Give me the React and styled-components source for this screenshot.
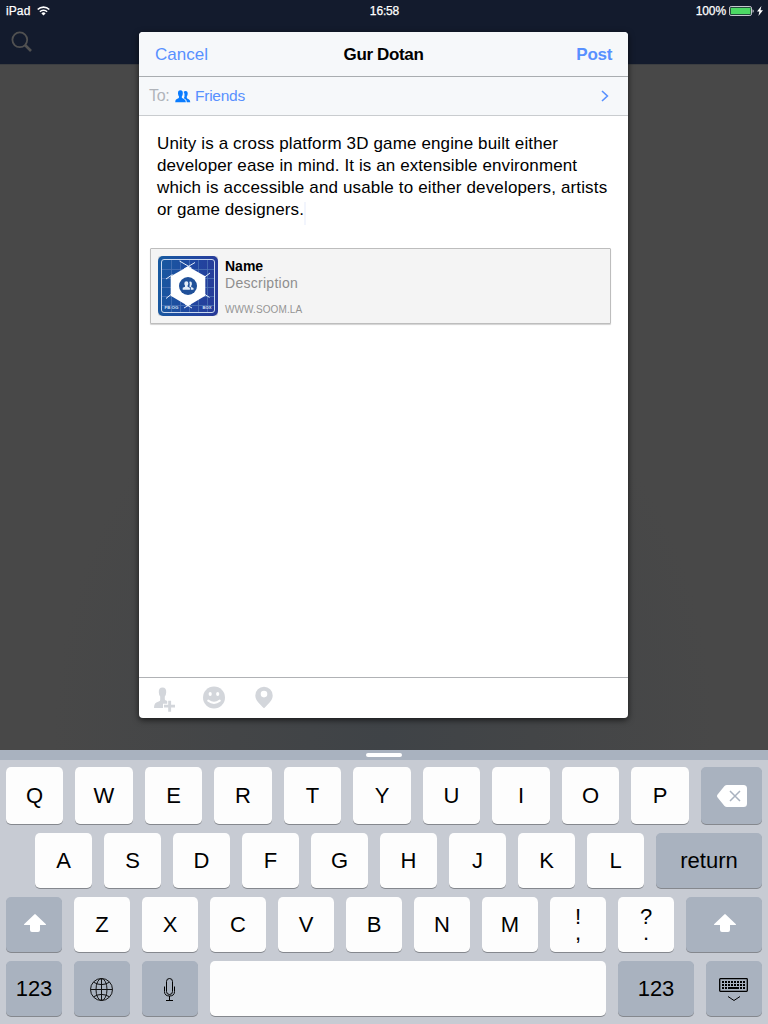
import React from "react";
import styled, { createGlobalStyle } from "styled-components";

const GlobalStyle = createGlobalStyle`
  * { box-sizing: border-box; }
  body {
    margin: 0;
    font-family: "Liberation Sans", Arial, Helvetica, sans-serif;
    color: #000;
  }
  svg { display: block; flex: none; }
`;

const Screen = styled.div`
  position: relative;
  display: flex;
  flex-direction: column;
  width: 768px;
  height: 1024px;
  overflow: hidden;
  background: radial-gradient(ellipse 330px 420px at 384px 740px, #3f4347 0%, #434547 45%, #484848 100%);
`;

const TopArea = styled.header`
  flex: none;
  height: 65px;
  background: #131b2d;
  border-bottom: 1px solid #3c3e41;
`;

const StatusBar = styled.div`
  display: grid;
  grid-template-columns: 1fr auto 1fr;
  align-items: center;
  height: 20px;
  padding: 2px 5px 0 6px;
  color: #fff;
  font-size: 12px;
  line-height: 18px;
`;

const StatusGroup = styled.div`
  display: flex;
  align-items: center;
  justify-content: ${(p) => (p.$end ? "flex-end" : "flex-start")};
  gap: ${(p) => p.$gap}px;
`;

const StatusText = styled.span`
  letter-spacing: ${(p) => p.$spacing || 0}px;
  -webkit-text-stroke: 0.25px #fff;
`;

const SearchButton = styled.div`
  padding: 11px 0 0 11px;
`;

const Dialog = styled.main`
  position: absolute;
  left: 139px;
  top: 32px;
  display: flex;
  flex-direction: column;
  width: 489px;
  height: 686px;
  overflow: hidden;
  border-radius: 4px;
  background: #fff;
`;

const DialogShadow = styled.div`
  position: absolute;
  left: 139px;
  top: 32px;
  width: 489px;
  height: 686px;
  border-radius: 4px;
  box-shadow: 0 2px 6px rgba(0, 0, 0, 0.65);
`;

const DialogHeader = styled.div`
  display: grid;
  grid-template-columns: 1fr auto 1fr;
  align-items: center;
  flex: none;
  height: 45px;
  padding: 2px 16px 0;
  border-bottom: 1px solid #a9adb0;
  background: #f6f8fa;
  font-size: 17px;
  line-height: 20px;
`;

const HeaderAction = styled.span`
  color: #5890ff;
  font-weight: ${(p) => (p.$strong ? 700 : 400)};
  text-align: ${(p) => (p.$strong ? "right" : "left")};
  letter-spacing: ${(p) => p.$spacing || 0}px;
`;

const Title = styled.h1`
  margin: 0;
  font-size: 17px;
  line-height: 20px;
  font-weight: 700;
  letter-spacing: -0.35px;
`;

const AudienceRow = styled.div`
  display: flex;
  align-items: center;
  flex: none;
  height: 39px;
  padding: 0 19px 0 10px;
  border-bottom: 1px solid #c9cccf;
  background: #f6f8fa;
  font-size: 16px;
`;

const AudienceLabel = styled.span`
  width: 26px;
  color: #b0b4ba;
  font-size: 16px;
  letter-spacing: -0.3px;
`;

const AudienceValue = styled.span`
  flex: 1;
  margin-left: 4px;
  color: #5890ff;
  font-size: 15.5px;
  letter-spacing: -0.25px;
`;

const Message = styled.p`
  flex: none;
  margin: 0;
  padding: 17px 0 27px 18px;
  font-size: 17px;
  line-height: 22px;
  white-space: nowrap;
`;

const Line = styled.span`
  display: block;
  letter-spacing: ${(p) => p.$spacing || 0}px;
`;

const Caret = styled.i`
  display: inline-block;
  width: 2px;
  height: 23px;
  margin: -2px 0 -5px;
  background: #f2f5fd;
  vertical-align: -5px;
`;

const LinkCard = styled.section`
  display: flex;
  flex: none;
  gap: 7px;
  width: 461px;
  height: 76px;
  margin-left: 11px;
  padding: 7px;
  border: 1px solid #bdbdbd;
  border-radius: 1px;
  background: #f4f4f4;
  box-shadow: 0 1px 1px rgba(0, 0, 0, 0.18);
`;

const LinkText = styled.div`
  display: flex;
  flex-direction: column;
  padding-top: 2px;
`;

const LinkName = styled.strong`
  font-size: 14px;
  line-height: 17px;
`;

const LinkDescription = styled.span`
  color: #8e8e8e;
  font-size: 14px;
  line-height: 17px;
  letter-spacing: 0.28px;
`;

const LinkDomain = styled.span`
  margin-top: 12px;
  color: #949494;
  font-size: 10px;
  line-height: 12px;
  letter-spacing: 0.1px;
`;

const ComposeTools = styled.footer`
  display: flex;
  flex: none;
  height: 41px;
  margin-top: auto;
  padding: 8px 0 0 15px;
  gap: 27px;
  border-top: 1px solid #b0b2b5;
`;

const Keyboard = styled.section`
  position: relative;
  flex: none;
  height: 274px;
  margin-top: auto;
  background: #c7cbd3;
`;

const Handle = styled.div`
  display: flex;
  justify-content: center;
  height: 10px;
  padding-top: 3px;
  background: #a9b2bf;

  &::after {
    content: "";
    width: 36px;
    height: 4px;
    border-radius: 2px;
    background: #fff;
  }
`;

const Keys = styled.div`
  display: flex;
  flex-direction: column;
  gap: 9px;
  padding-top: 7px;
`;

const KeyRow = styled.div`
  display: flex;
  gap: 12px;
  height: ${(p) => p.$height}px;
  padding-left: ${(p) => p.$indent}px;
`;

const Key = styled.div`
  display: flex;
  flex-direction: column;
  align-items: center;
  justify-content: center;
  flex: none;
  width: ${(p) => p.$width}px;
  border-radius: 5px;
  background: ${(p) => (p.$dark ? "#a9b2bf" : "#fdfdfd")};
  box-shadow: 0 1px 0 #85888e;
  font-size: 22px;
  line-height: 26px;
`;

const ShiftKey = styled(Key)`
  padding: 0 0 3px 2px;
`;

const FunctionKey = styled(Key)`
  padding-top: 2px;
`;

const StackedLabel = styled.span`
  line-height: 16px;
  text-align: center;
  white-space: pre-line;
`;

const Wifi = () => (
  <svg width="13" height="10" viewBox="0 0 13 10" fill="none" stroke="#fff" strokeWidth="1.6">
    <path d="M.7 3.5a8.2 8.2 0 0 1 11.6 0" />
    <path d="M2.9 5.8a5.1 5.1 0 0 1 7.2 0" />
    <path d="M6.5 9.5 4.4 7.4a3 3 0 0 1 4.2 0Z" fill="#fff" stroke="none" />
  </svg>
);

const Battery = () => (
  <svg width="25" height="10" viewBox="0 0 25 10">
    <rect x=".5" y=".5" width="22" height="9" rx="1.6" fill="none" stroke="#c5c8ce" />
    <rect x="1.7" y="1.7" width="19.8" height="6.6" rx=".6" fill="#4cd964" />
    <path d="M23.5 3.2q1.3.4 1.3 1.8t-1.3 1.8Z" fill="#c5c8ce" />
  </svg>
);

const Bolt = () => (
  <svg width="6" height="10" viewBox="0 0 6 10" fill="#fff">
    <path d="M4.4 0 0 5.500h2.400L1.400 10 6 4.200H3.500Z" />
  </svg>
);

const Search = () => (
  <svg width="22" height="22" viewBox="0 0 22 22" fill="none" stroke="#515151">
    <circle cx="8.8" cy="8.8" r="7.4" strokeWidth="1.8" />
    <path d="m14 14 6 6" strokeWidth="2.6" />
  </svg>
);

const Friends = () => (
  <svg width="16" height="13" viewBox="0 0 16 13" fill="#0a7cff">
    <path d="M8.600 1.900Q9.300.900 10.600.900q2.300 0 2.100 2.900-.1 1.800-.9 2.700v1.300q0 .7 1.500 1.200 2 .8 2 3.300h-3.500q0-2.300-1.700-3.300l-1.400-.800q1.100-1.500.8-4-.1-1.300-.9-2.300Z" />
    <path d="M5.400.3Q8 .3 7.800 3.600q-.1 1.900-1 2.800v1.200q0 .6 1.600 1.200 2.400.9 2.500 3.500H.2q0-2.600 1.600-3.200Q4 8.300 4 7.500V6.400Q3.100 5.500 3 3.600 2.800.3 5.400.3Z" />
  </svg>
);

const ChevronRight = () => (
  <svg width="8" height="12" viewBox="0 0 8 12" fill="none" stroke="#5890ff" strokeWidth="1.6">
    <path d="m1 1 5.400 5L1 11" />
  </svg>
);

const AppIcon = () => (
  <svg width="60" height="60" viewBox="0 0 60 60">
    <defs>
      <linearGradient id="iconBlue" x1="0" x2="1" y1=".5" y2=".6">
        <stop offset="0" stopColor="#1859a0" />
        <stop offset=".6" stopColor="#2146a0" />
        <stop offset="1" stopColor="#283a98" />
      </linearGradient>
    </defs>
    <rect width="60" height="60" rx="2" fill="#d5d7da" />
    <rect width="60" height="60" rx="5" fill="url(#iconBlue)" />
    <path d="M13.500 3v54M22.500 3v54M31.500 3v54M40.500 3v54M49.500 3v54M3 13.500h54M3 22.500h54M3 31.500h54M3 40.500h54M3 49.500h54" stroke="#4d73b5" strokeWidth=".8" />
    <rect x="3.500" y="3.500" width="53" height="53" rx="2.500" fill="none" stroke="#cbd9ef" strokeWidth="1" />
    <path d="m21.500 5 12 7M37 6.500 26 13M8 23l6.500-4.500M46 21.500l6-4.500M8 42.500l5.500-4.500M47 38.500l4.500 3M26 52l7-4M27 48l7 4" stroke="#e5edf8" strokeWidth="1" />
    <path d="M30 10.500 47.300 20.300v19.400L30 50 12.700 39.700V20.300Z" fill="#fff" />
    <circle cx="30" cy="30" r="9" fill="#205099" />
    <g fill="#e5edf8">
      <path d="M28.500 25.200q1.900 0 1.800 2.300-.1 1.400-.7 2v1.300l2.300 1v2h-7.200v-2l2.300-1v-1.300q-.7-.6-.7-2-.1-2.300 2.200-2.300Z" />
      <path d="M31.300 25.800q2.600-1 2.600 2 0 1.400-.7 2v1.100l2.300 1v1.900h-2.700v-2.500l-1.400-.6q.9-2.600-.1-4.900Z" />
    </g>
    <g fill="#dce5f4" fontSize="3.400" fontWeight="700">
      <text x="6.500" y="52.500" textLength="14" lengthAdjust="spacingAndGlyphs">FB OG</text>
      <text x="44.500" y="52.500" textLength="9" lengthAdjust="spacingAndGlyphs">BOX</text>
    </g>
  </svg>
);

const AddPerson = () => (
  <svg width="22" height="26" viewBox="0 0 22 26">
    <path d="M8.500 1.500q4 0 3.700 4.700-.1 2.900-1.400 4.300v2.700q0 .8 1.200 1.400l3 1.200v6.200H0q0-4.300 2.400-5.400l2.800-1.300q1-.6 1-1.600v-3.200Q4.900 9 4.800 6.200 4.500 1.500 8.500 1.500Z" fill="#d3d6db" />
    <path d="M13.200 13.800h4.900v4H22v4.800h-3.900v4.200h-4.900v-4.200H9v-4.800h4.200Z" fill="#fff" />
    <path d="M14.200 14.800h2.900v4H21v2.800h-3.900v4.200h-2.900v-4.200H10v-2.800h4.200Z" fill="#d3d6db" />
  </svg>
);

const Smiley = () => (
  <svg width="22" height="24" viewBox="0 0 22 24">
    <circle cx="11" cy="11.500" r="11" fill="#d3d6db" />
    <ellipse cx="7.200" cy="8" rx="1.600" ry="2" fill="#fff" />
    <ellipse cx="14.700" cy="8" rx="1.600" ry="2" fill="#fff" />
    <path d="M5.200 14.600q5.800 4.500 11.600 0" fill="none" stroke="#fff" strokeWidth="2" strokeLinecap="round" />
  </svg>
);

const Pin = () => (
  <svg width="22" height="24" viewBox="0 0 22 24" fill="#d3d6db">
    <path fillRule="evenodd" d="M12 .8a8.700 8.700 0 0 1 8.700 8.700c0 4.800-4.200 8.300-8.700 12.800-4.500-4.500-8.700-8-8.700-12.800A8.700 8.700 0 0 1 12 .8Zm0 4a3.300 3.300 0 1 0 0 6.600 3.300 3.300 0 0 0 0-6.600Z" />
  </svg>
);

const Backspace = () => (
  <svg width="30" height="22" viewBox="0 0 30 22">
    <path d="M10 0h16.500Q30 0 30 3.500v15q0 3.500-3.500 3.500H10q-1.500 0-2.500-1L.6 12.400Q-.6 11 .6 9.600L7.500 1Q8.500 0 10 0Z" fill="#fff" />
    <path d="m13 6 10 10M23 6 13 16" stroke="#a9b2bf" strokeWidth="1.500" />
  </svg>
);

const Shift = () => (
  <svg width="22" height="18" viewBox="0 0 22 18" fill="#fff">
    <path d="M10.300.4Q11-.2 11.700.4l10 9.700q.7.900-.4.900H16v5q0 2-2 2H8q-2 0-2-2v-5H.7q-1.100 0-.4-.9Z" />
  </svg>
);

const Globe = () => (
  <svg width="24" height="24" viewBox="0 0 24 24" fill="none" stroke="#111" strokeWidth="1">
    <circle cx="11.500" cy="11.500" r="11" />
    <ellipse cx="11.500" cy="11.500" rx="5.500" ry="11" />
    <path d="M11.500.5v22M.5 11.500h22M3.500 4.200Q11.500 9 19.500 4.200M3.500 18.800Q11.500 14 19.500 18.800" />
  </svg>
);

const Microphone = () => (
  <svg width="12" height="24" viewBox="0 0 12 24" fill="none" stroke="#000" strokeWidth="1">
    <rect x="2.500" y=".5" width="6" height="16" rx="3" />
    <path d="M.5 8.500v5q0 4.500 5 4.500t5-4.500v-5M5.500 18v4.500M2 22.500h7" />
  </svg>
);

const HideKeyboard = () => (
  <svg width="30" height="24" viewBox="0 0 30 24" fill="none" stroke="#000">
    <rect x=".7" y=".7" width="27.600" height="12.600" rx=".7" strokeWidth="1.300" />
    <path d="M3 4h23.500M3 7h23.500" strokeWidth="2" strokeDasharray="2 1" />
    <path d="M3 10h2m1 0h2m1 0h11m1 0h2m1 0h2" strokeWidth="2" />
    <path d="m9 18.500 6 4 6-4" strokeWidth="1" />
  </svg>
);

const topRow = [
  ["Q", 57], ["W", 58], ["E", 57], ["R", 58], ["T", 57],
  ["Y", 58], ["U", 57], ["I", 58], ["O", 57], ["P", 58],
];

export default function App() {
  return (
    <>
      <GlobalStyle />
      <Screen>
        <TopArea>
          <StatusBar>
            <StatusGroup $gap={7}>
              <StatusText $spacing={0.1}>iPad</StatusText>
              <Wifi />
            </StatusGroup>
            <StatusText $spacing={-0.15}>16:58</StatusText>
            <StatusGroup $end $gap={3}>
              <StatusText $spacing={-0.1}>100%</StatusText>
              <Battery />
              <Bolt />
            </StatusGroup>
          </StatusBar>
          <SearchButton><Search /></SearchButton>
        </TopArea>

        <DialogShadow />
        <Dialog>
          <DialogHeader>
            <HeaderAction>Cancel</HeaderAction>
            <Title>Gur Dotan</Title>
            <HeaderAction $strong $spacing={-0.3}>Post</HeaderAction>
          </DialogHeader>
          <AudienceRow>
            <AudienceLabel>To:</AudienceLabel>
            <Friends />
            <AudienceValue>Friends</AudienceValue>
            <ChevronRight />
          </AudienceRow>
          <Message>
            <Line $spacing={0.135}>Unity is a cross platform 3D game engine built either</Line>
            <Line $spacing={0.095}>developer ease in mind. It is an extensible environment</Line>
            <Line $spacing={0.15}>which is accessible and usable to either developers, artists</Line>
            <Line $spacing={0.08}>or game designers.<Caret /></Line>
          </Message>
          <LinkCard>
            <AppIcon />
            <LinkText>
              <LinkName>Name</LinkName>
              <LinkDescription>Description</LinkDescription>
              <LinkDomain>WWW.SOOM.LA</LinkDomain>
            </LinkText>
          </LinkCard>
          <ComposeTools>
            <AddPerson />
            <Smiley />
            <Pin />
          </ComposeTools>
        </Dialog>

        <Keyboard>
          <Handle />
          <Keys>
            <KeyRow $height={57} $indent={6}>
              {topRow.map(([letter, width]) => (
                <Key key={letter} $width={width}>{letter}</Key>
              ))}
              <Key $width={61} $dark><Backspace /></Key>
            </KeyRow>
            <KeyRow $height={55} $indent={35}>
              {[..."ASDFGHJKL"].map((letter) => (
                <Key key={letter} $width={57}>{letter}</Key>
              ))}
              <Key $width={106} $dark>return</Key>
            </KeyRow>
            <KeyRow $height={55} $indent={6}>
              <ShiftKey $width={56} $dark><Shift /></ShiftKey>
              {[..."ZXCVBNM"].map((letter) => (
                <Key key={letter} $width={56}>{letter}</Key>
              ))}
              <Key $width={56}><StackedLabel>{"!\n,"}</StackedLabel></Key>
              <Key $width={56}><StackedLabel>{"?\n."}</StackedLabel></Key>
              <ShiftKey $width={76} $dark><Shift /></ShiftKey>
            </KeyRow>
            <KeyRow $height={55} $indent={6}>
              <Key $width={56} $dark>123</Key>
              <FunctionKey $width={56} $dark><Globe /></FunctionKey>
              <FunctionKey $width={56} $dark><Microphone /></FunctionKey>
              <Key $width={396} />
              <Key $width={76} $dark>123</Key>
              <FunctionKey $width={56} $dark><HideKeyboard /></FunctionKey>
            </KeyRow>
          </Keys>
        </Keyboard>
      </Screen>
    </>
  );
}
